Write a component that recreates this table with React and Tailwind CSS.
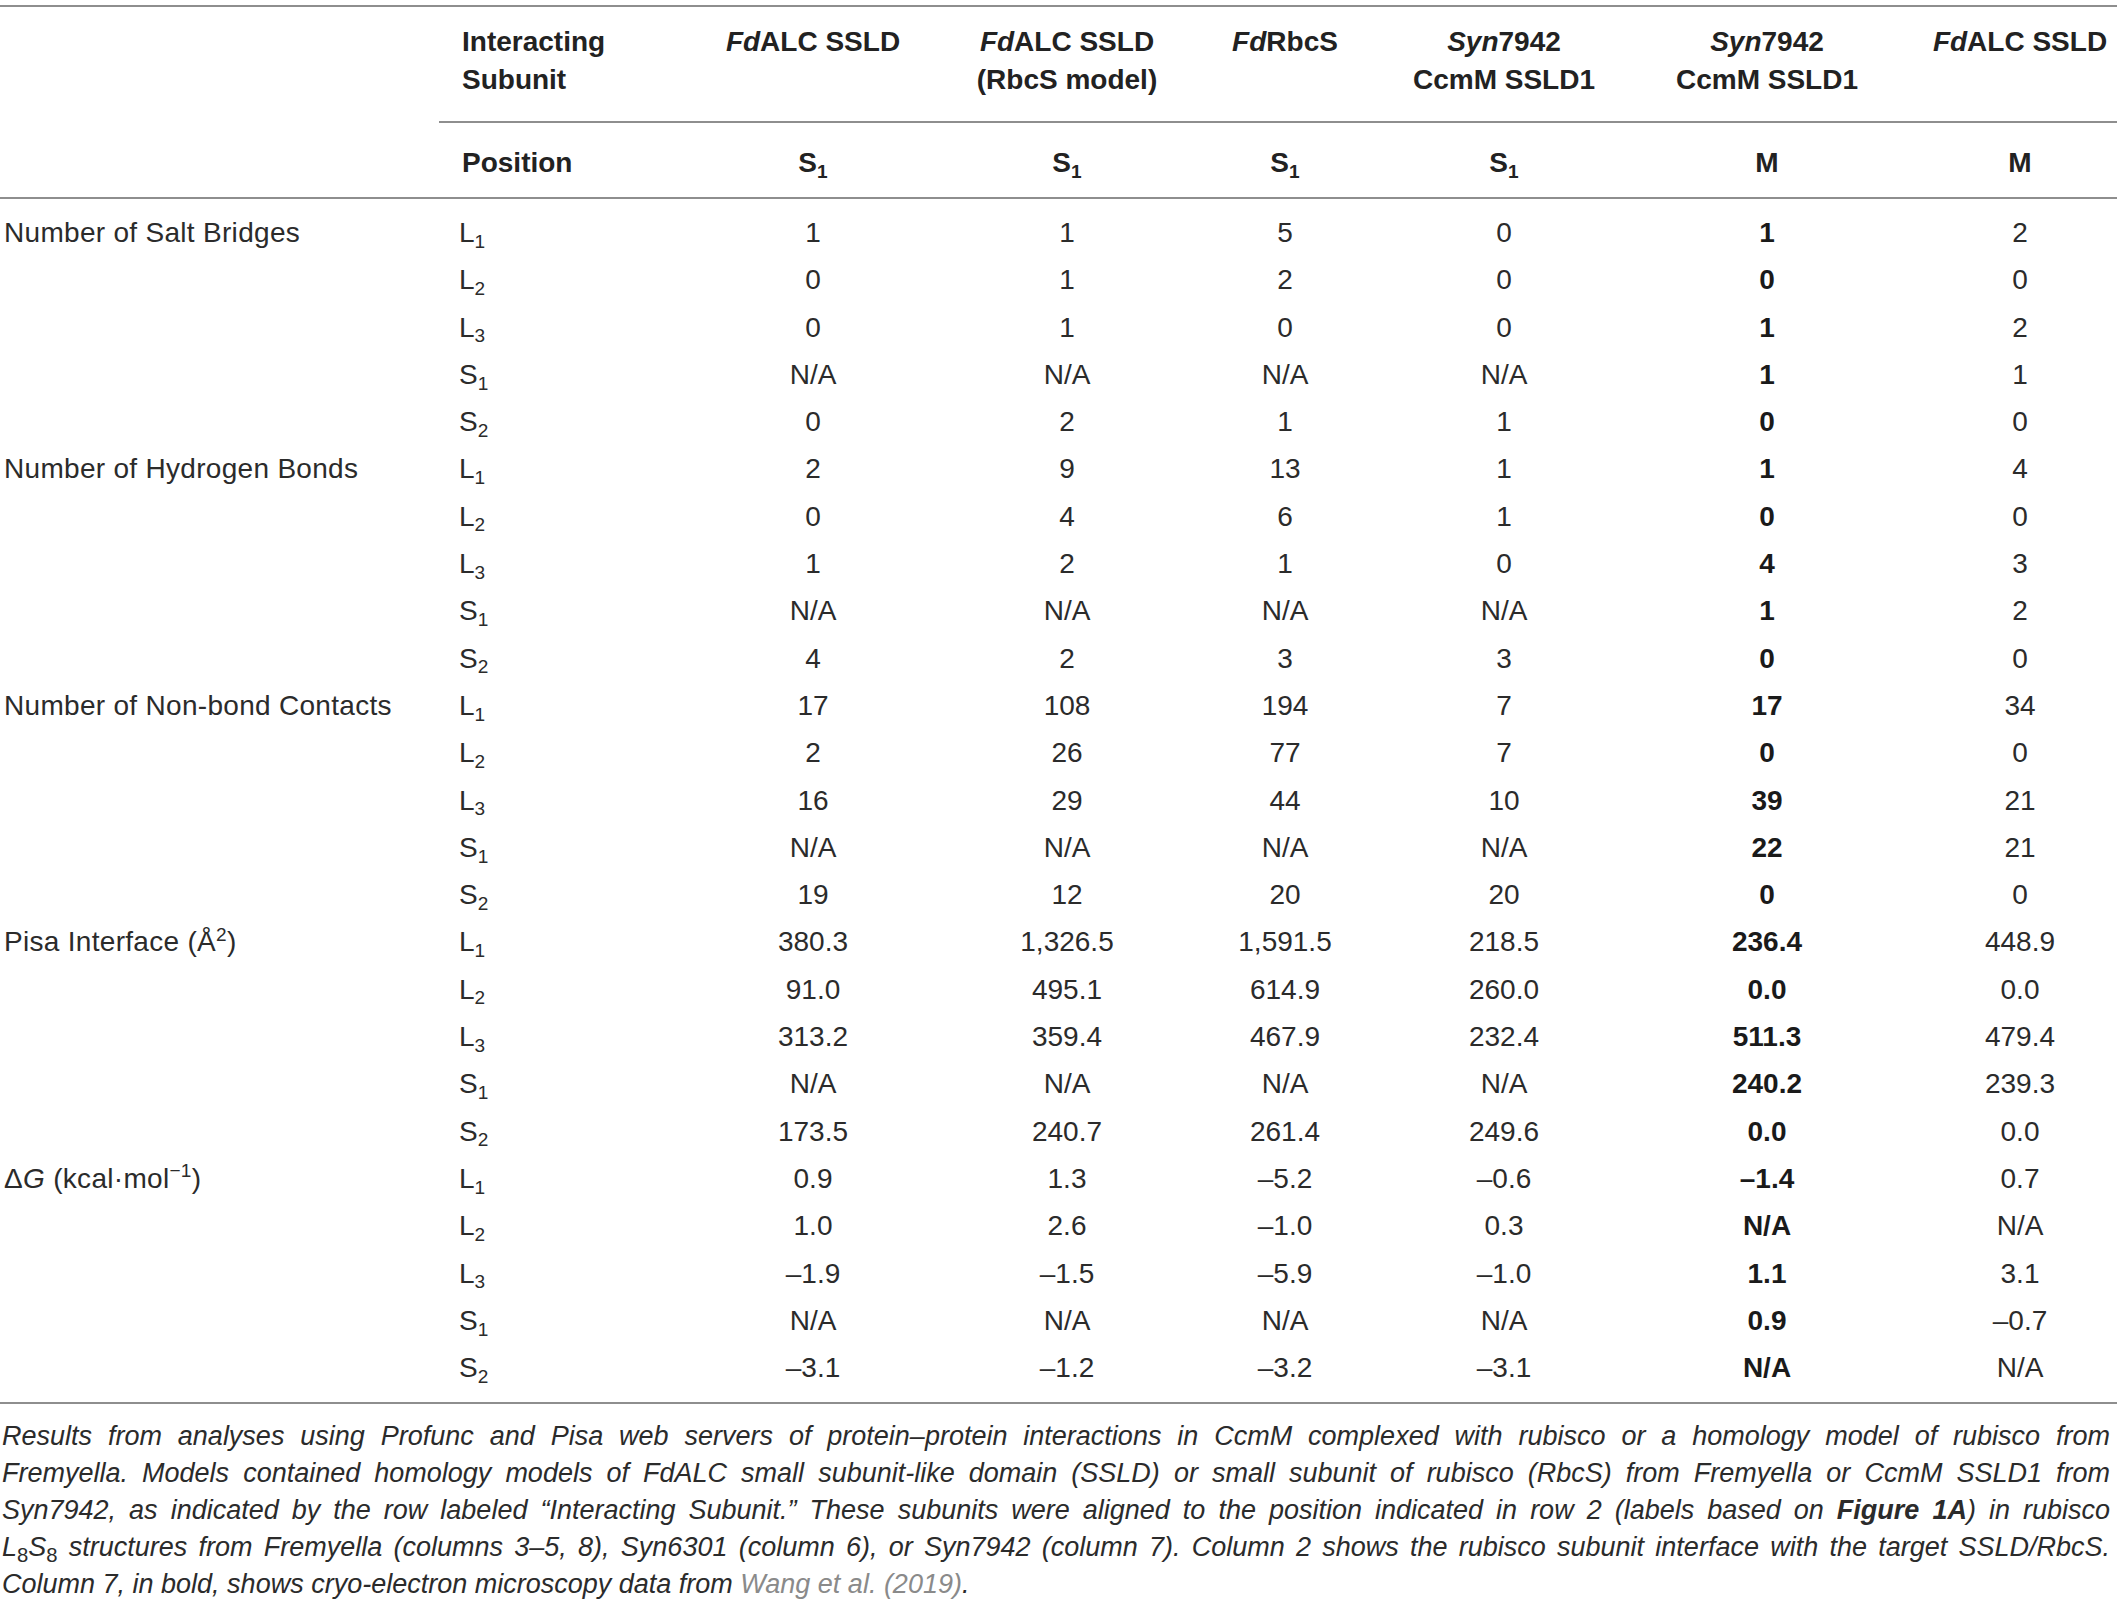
const COLS = "grid grid-cols-[251px_246px_262px_174px_264px_287px_194px]";
const ROWCOLS = "grid grid-cols-[439px_251px_246px_262px_174px_264px_287px_194px]";

const Sub = ({ children }) => <sub className="text-[0.68em] bottom-[-0.3em]">{children}</sub>;

const groups = [
  {
    label: <>Number of Salt Bridges</>,
    rows: [
      ["L", "1", "1", "1", "5", "0", "1", "2"],
      ["L", "2", "0", "1", "2", "0", "0", "0"],
      ["L", "3", "0", "1", "0", "0", "1", "2"],
      ["S", "1", "N/A", "N/A", "N/A", "N/A", "1", "1"],
      ["S", "2", "0", "2", "1", "1", "0", "0"],
    ],
  },
  {
    label: <>Number of Hydrogen Bonds</>,
    rows: [
      ["L", "1", "2", "9", "13", "1", "1", "4"],
      ["L", "2", "0", "4", "6", "1", "0", "0"],
      ["L", "3", "1", "2", "1", "0", "4", "3"],
      ["S", "1", "N/A", "N/A", "N/A", "N/A", "1", "2"],
      ["S", "2", "4", "2", "3", "3", "0", "0"],
    ],
  },
  {
    label: <>Number of Non-bond Contacts</>,
    rows: [
      ["L", "1", "17", "108", "194", "7", "17", "34"],
      ["L", "2", "2", "26", "77", "7", "0", "0"],
      ["L", "3", "16", "29", "44", "10", "39", "21"],
      ["S", "1", "N/A", "N/A", "N/A", "N/A", "22", "21"],
      ["S", "2", "19", "12", "20", "20", "0", "0"],
    ],
  },
  {
    label: (
      <>
        Pisa Interface (Å<sup className="text-[0.68em] top-[-0.55em]">2</sup>)
      </>
    ),
    rows: [
      ["L", "1", "380.3", "1,326.5", "1,591.5", "218.5", "236.4", "448.9"],
      ["L", "2", "91.0", "495.1", "614.9", "260.0", "0.0", "0.0"],
      ["L", "3", "313.2", "359.4", "467.9", "232.4", "511.3", "479.4"],
      ["S", "1", "N/A", "N/A", "N/A", "N/A", "240.2", "239.3"],
      ["S", "2", "173.5", "240.7", "261.4", "249.6", "0.0", "0.0"],
    ],
  },
  {
    label: (
      <>
        Δ<i>G</i> (kcal·mol<sup className="text-[0.68em] top-[-0.55em]">−1</sup>)
      </>
    ),
    rows: [
      ["L", "1", "0.9", "1.3", "–5.2", "–0.6", "–1.4", "0.7"],
      ["L", "2", "1.0", "2.6", "–1.0", "0.3", "N/A", "N/A"],
      ["L", "3", "–1.9", "–1.5", "–5.9", "–1.0", "1.1", "3.1"],
      ["S", "1", "N/A", "N/A", "N/A", "N/A", "0.9", "–0.7"],
      ["S", "2", "–3.1", "–1.2", "–3.2", "–3.1", "N/A", "N/A"],
    ],
  },
];

const HeadCell = ({ children, className = "" }) => (
  <div className={"text-center " + className}>{children}</div>
);

export default function App() {
  return (
    <div className="w-[2117px] bg-white text-[#2b2b2b] font-['Liberation_Sans',Arial,sans-serif] text-[28px]">
      <div className="mt-[5px] border-t-2 border-[#8e8e8e]">
        <div className="flex">
          <div className="w-[439px] shrink-0" />
          <div className="flex-1">
            <div className={COLS + " pt-[16px] pb-[22px] border-b-2 border-[#8e8e8e] font-bold leading-[38px] text-[#222]"}>
              <div className="pl-[23px]">
                Interacting
                <br />
                Subunit
              </div>
              <HeadCell>
                <i>Fd</i>ALC SSLD
              </HeadCell>
              <HeadCell>
                <i>Fd</i>ALC SSLD
                <br />
                (RbcS model)
              </HeadCell>
              <HeadCell>
                <i>Fd</i>RbcS
              </HeadCell>
              <HeadCell>
                <i>Syn</i>7942
                <br />
                CcmM SSLD1
              </HeadCell>
              <HeadCell className="pr-[25px]">
                <i>Syn</i>7942
                <br />
                CcmM SSLD1
              </HeadCell>
              <HeadCell>
                <i>Fd</i>ALC SSLD
              </HeadCell>
            </div>
            <div className={COLS + " pt-[21px] pb-[15px] font-bold leading-[38px] text-[#222]"}>
              <div className="pl-[23px]">Position</div>
              <HeadCell>
                S<Sub>1</Sub>
              </HeadCell>
              <HeadCell>
                S<Sub>1</Sub>
              </HeadCell>
              <HeadCell>
                S<Sub>1</Sub>
              </HeadCell>
              <HeadCell>
                S<Sub>1</Sub>
              </HeadCell>
              <HeadCell className="pr-[25px]">M</HeadCell>
              <HeadCell>M</HeadCell>
            </div>
          </div>
        </div>
      </div>

      <div className="border-t-2 border-b-2 border-[#8e8e8e] pt-[10px] pb-[11px]">
        {groups.map((g, gi) =>
          g.rows.map((r, ri) => (
            <div key={gi + "-" + ri} className={ROWCOLS + " h-[47.3px] leading-[47.3px]"}>
              <div className="pl-[4px] whitespace-nowrap tracking-[0.3px]">{ri === 0 ? g.label : null}</div>
              <div className="pl-[20px]">
                {r[0]}
                <Sub>{r[1]}</Sub>
              </div>
              <div className="text-center">{r[2]}</div>
              <div className="text-center">{r[3]}</div>
              <div className="text-center">{r[4]}</div>
              <div className="text-center">{r[5]}</div>
              <div className="text-center pr-[25px] font-bold text-[#1a1a1a]">{r[6]}</div>
              <div className="text-center">{r[7]}</div>
            </div>
          ))
        )}
      </div>

      <div className="pt-[14px] pl-[2px] pr-[7px] italic text-[27px] leading-[37px] text-[#2b2b2b]">
        <div className="text-justify [text-align-last:justify] whitespace-nowrap">
          Results from analyses using Profunc and Pisa web servers of protein–protein interactions in CcmM complexed with rubisco or a homology model of rubisco from
        </div>
        <div className="text-justify [text-align-last:justify] whitespace-nowrap">
          Fremyella. Models contained homology models of FdALC small subunit-like domain (SSLD) or small subunit of rubisco (RbcS) from Fremyella or CcmM SSLD1 from
        </div>
        <div className="text-justify [text-align-last:justify] whitespace-nowrap">
          Syn7942, as indicated by the row labeled “Interacting Subunit.” These subunits were aligned to the position indicated in row 2 (labels based on{" "}
          <b>Figure 1A</b>) in rubisco
        </div>
        <div className="text-justify [text-align-last:justify] whitespace-nowrap">
          L<sub className="not-italic text-[0.75em] bottom-[-0.3em]">8</sub>S<sub className="not-italic text-[0.75em] bottom-[-0.3em]">8</sub> structures from Fremyella (columns 3–5, 8), Syn6301 (column 6), or Syn7942 (column 7). Column 2 shows the rubisco subunit interface with the target SSLD/RbcS.
        </div>
        <div className="whitespace-nowrap">
          Column 7, in bold, shows cryo-electron microscopy data from <span className="text-[#8a8a8a]">Wang et al. (2019)</span>.
        </div>
      </div>
    </div>
  );
}
